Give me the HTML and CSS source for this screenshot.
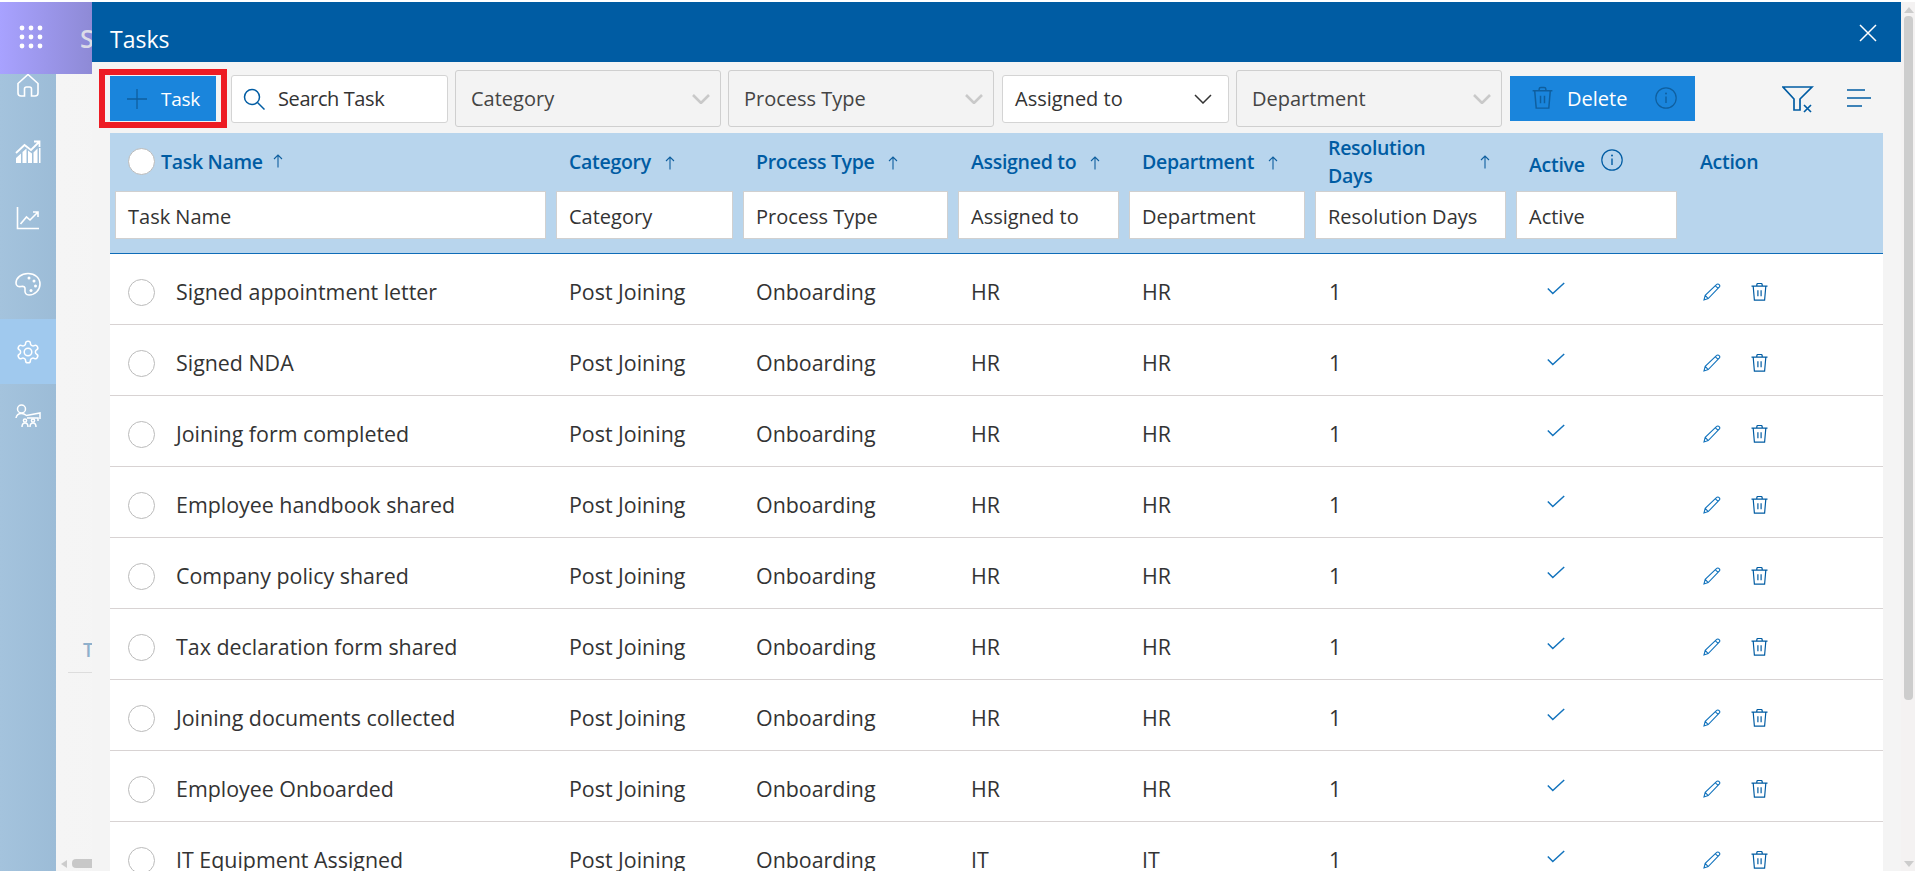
FILE: index.html

```html
<!DOCTYPE html>
<html lang="en">
<head>
    <meta charset="UTF-8">
    <title>Tasks</title>
    <link rel="stylesheet" href="styles.css">
</head>
<body>

<svg class="defs" width="0" height="0">
    <symbol id="i-arrow" viewBox="0 0 10 14"><path d="M5 13.500V1M1 5l4-4 4 4" fill="none" stroke="currentColor" stroke-width="1.100"/></symbol>
    <symbol id="i-check" viewBox="0 0 18 13"><path d="M.8 6.500l5 5L17.200 1" fill="none" stroke="currentColor" stroke-width="1.500"/></symbol>
    <symbol id="i-pencil" viewBox="0 0 18 18"><path d="M1 17l1.200-4.600L13.400 1.600a1.800 1.800 0 0 1 2.800 0 1.900 1.900 0 0 1 0 2.600L5.200 15.600zM2.200 12.400l3 3.200M12.400 2.800l3 2.800" fill="none" stroke="currentColor" stroke-width="1.100"/></symbol>
    <symbol id="i-trash" viewBox="0 0 17 18"><path d="M.5 3.200h16M2.200 3.200l1.200 14h10.200l1.200-14M5.800 3V1.800C5.800.9 6.500.5 7.200.5h2.600c.7 0 1.400.4 1.400 1.300V3M6.900 7.200v6M10.100 7.200v6" fill="none" stroke="currentColor" stroke-width="1.200"/></symbol>
    <symbol id="i-info" viewBox="0 0 22 22"><circle cx="11" cy="11" r="10.200" fill="none" stroke="currentColor" stroke-width="1.200"/><path d="M11 9.500v6.500" stroke="currentColor" stroke-width="1.400"/><circle cx="11" cy="6.600" r="1" fill="currentColor"/></symbol>
    <symbol id="i-chevron" viewBox="0 0 18 10"><path d="M1 1l8 8 8-8" fill="none" stroke="currentColor" stroke-width="2.600"/></symbol>
</svg>

<!-- Page behind the dialog -->
<div class="app">
    <div class="app-head">
        <svg class="grid-icon" width="24" height="24" viewBox="0 0 24 24" fill="#fff">
            <circle cx="3" cy="3" r="2.400"/><circle cx="12" cy="3" r="2.400"/><circle cx="21" cy="3" r="2.400"/>
            <circle cx="3" cy="12" r="2.400"/><circle cx="12" cy="12" r="2.400"/><circle cx="21" cy="12" r="2.400"/>
            <circle cx="3" cy="21" r="2.400"/><circle cx="12" cy="21" r="2.400"/><circle cx="21" cy="21" r="2.400"/>
        </svg>
        <span class="app-title">S</span>
    </div>
    <div class="app-main">
        <nav class="rail">
            <div class="rail-item rail-home">
                <svg width="24" height="24" viewBox="0 0 24 24" fill="none" stroke="#fff" stroke-width="1.600"><path d="M2 10.500L12 1.500l10 9v9.500a3 3 0 0 1-3 3h-3.500v-7a2 2 0 0 0-2-2h-3a2 2 0 0 0-2 2v7H5a3 3 0 0 1-3-3z"/></svg>
            </div>
            <div class="rail-item">
                <svg width="26" height="24" viewBox="0 0 26 24" fill="#fff"><path d="M1 23v-5l5-4.500V23zM7.500 23V12l4-3.500V23zM13 23V10.500l4 3V23zM18.500 23V12.500l4-4V23z"/><path d="M24 23V8h1.500v15z"/><path d="M1 13L9.500 5l6.500 5L24 2M19 1.500h5.500V7" fill="none" stroke="#fff" stroke-width="1.800"/></svg>
            </div>
            <div class="rail-item">
                <svg width="24" height="24" viewBox="0 0 24 24" fill="none" stroke="#fff" stroke-width="1.600"><path d="M1.500 1v21.500H23M4.500 18l6-7 3.500 3 7.500-7.500M17 6h5v5"/></svg>
            </div>
            <div class="rail-item">
                <svg width="26" height="24" viewBox="0 0 26 24" fill="none" stroke="#fff" stroke-width="1.600"><path d="M13 1.500C6 1.500 1 6 1 11c0 3 2.500 4 5 3.500 3-.6 4.500.5 4 3.500-.4 3 1 5 4 5 6 0 11-5 11-11S20 1.500 13 1.500z"/><g fill="#fff" stroke="none"><circle cx="14" cy="6" r="1.500"/><circle cx="19" cy="9" r="1.500"/><circle cx="20.500" cy="14" r="1.500"/><circle cx="16" cy="18.500" r="1.500"/></g></svg>
            </div>
            <div class="rail-item rail-active">
                <svg width="26" height="26" viewBox="0 0 24 24" fill="none" stroke="#fff" stroke-width="1.400"><path d="M12.220 2h-.44a2 2 0 0 0-2 2v.18a2 2 0 0 1-1 1.730l-.43.25a2 2 0 0 1-2 0l-.15-.08a2 2 0 0 0-2.730.73l-.22.38a2 2 0 0 0 .73 2.730l.15.1a2 2 0 0 1 1 1.720v.51a2 2 0 0 1-1 1.740l-.15.09a2 2 0 0 0-.73 2.730l.22.38a2 2 0 0 0 2.730.73l.15-.08a2 2 0 0 1 2 0l.43.25a2 2 0 0 1 1 1.730V20a2 2 0 0 0 2 2h.44a2 2 0 0 0 2-2v-.18a2 2 0 0 1 1-1.730l.43-.25a2 2 0 0 1 2 0l.15.08a2 2 0 0 0 2.730-.73l.22-.39a2 2 0 0 0-.73-2.730l-.15-.08a2 2 0 0 1-1-1.740v-.5a2 2 0 0 1 1-1.740l.15-.09a2 2 0 0 0 .73-2.730l-.22-.38a2 2 0 0 0-2.730-.73l-.15.08a2 2 0 0 1-2 0l-.43-.25a2 2 0 0 1-1-1.730V4a2 2 0 0 0-2-2z"/><circle cx="12" cy="12" r="3.500"/></svg>
            </div>
            <div class="rail-item rail-people">
                <svg width="26" height="24" viewBox="0 0 26 24" fill="none" stroke="#fff" stroke-width="1.500"><circle cx="6.500" cy="5" r="4"/><path d="M1 14c.5-3 3-4.500 5.500-4.500 2.200 0 3.500.8 5 2L25 9v6M7 23c0-3 1.500-4 3-4s3 1 3 4M15 23c0-3 1.500-4 3-4s3 1 3 4M12 14h11v3"/><circle cx="10" cy="16.500" r="1.600"/><circle cx="18" cy="16.500" r="1.600"/></svg>
            </div>
        </nav>
        <div class="content">
            <div class="content-title">T</div>
            <div class="content-bar">
                <span class="bar-arrow-left"></span>
                <span class="bar-thumb"></span>
            </div>
        </div>
    </div>
</div>

<!-- Dialog -->
<div class="overlay">
    <div class="modal">
        <div class="modal-head">
            <span class="modal-title">Tasks</span>
            <svg class="modal-close" width="18" height="18" viewBox="0 0 18 18"><path d="M1 1l16 16M17 1L1 17" stroke="#fff" stroke-width="1.500"/></svg>
        </div>

        <div class="toolbar">
            <div class="marked">
                <button class="btn btn-task">
                    <svg width="20" height="20" viewBox="0 0 20 20"><path d="M10 0v20M0 10h20" stroke="#0f5f9f" stroke-width="1.300"/></svg>
                    <span>Task</span>
                </button>
            </div>
            <div class="search">
                <svg width="22" height="22" viewBox="0 0 22 22" fill="none" stroke="#005ca3" stroke-width="1.500"><circle cx="9" cy="9" r="7.500"/><path d="M14.500 14.500l7 7"/></svg>
                <span>Search Task</span>
            </div>
            <div class="select select-off select-cat"><span>Category</span><svg class="chevron"><use href="#i-chevron"/></svg></div>
            <div class="select select-off select-cat"><span>Process Type</span><svg class="chevron"><use href="#i-chevron"/></svg></div>
            <div class="select select-on"><span>Assigned to</span><svg class="chevron" viewBox="0 0 18 10"><path d="M1 1l8 8 8-8" fill="none" stroke="#333" stroke-width="1.500"/></svg></div>
            <div class="select select-off select-cat"><span>Department</span><svg class="chevron"><use href="#i-chevron"/></svg></div>
            <button class="btn btn-delete">
                <svg class="delete-trash"><use href="#i-trash"/></svg>
                <span>Delete</span>
                <svg class="delete-info"><use href="#i-info"/></svg>
            </button>
            <div class="tool-icons">
                <svg width="32" height="27" viewBox="0 0 32 27" fill="none" stroke="#005ca3" stroke-width="1.700"><path d="M1 1h29L18 13v11h-6V13zM22 19l7 7M29 19l-7 7"/></svg>
                <svg width="24" height="18" viewBox="0 0 24 18" stroke="#005ca3" stroke-width="1.500"><path d="M0 1h18M0 9h24M0 17h15"/></svg>
            </div>
        </div>

        <table class="tasks">
            <colgroup>
                <col class="c-name"><col class="c-cat"><col class="c-proc"><col class="c-asg"><col class="c-dep"><col class="c-res"><col class="c-act"><col class="c-action">
            </colgroup>
            <thead>
                <tr class="head-row">
                    <th><span class="head-first"><span class="radio radio-head"></span>Task Name <svg class="sort"><use href="#i-arrow"/></svg></span></th>
                    <th>Category <svg class="sort"><use href="#i-arrow"/></svg></th>
                    <th>Process Type <svg class="sort"><use href="#i-arrow"/></svg></th>
                    <th>Assigned to <svg class="sort"><use href="#i-arrow"/></svg></th>
                    <th>Department <svg class="sort"><use href="#i-arrow"/></svg></th>
                    <th class="head-res"><span class="head-wrap"><span>Resolution<br>Days</span><svg class="sort"><use href="#i-arrow"/></svg></span></th>
                    <th><span class="head-active">Active</span> <svg class="head-info"><use href="#i-info"/></svg></th>
                    <th>Action</th>
                </tr>
                <tr class="filter-row">
                    <td><div class="filter">Task Name</div></td>
                    <td><div class="filter">Category</div></td>
                    <td><div class="filter">Process Type</div></td>
                    <td><div class="filter">Assigned to</div></td>
                    <td><div class="filter">Department</div></td>
                    <td><div class="filter">Resolution Days</div></td>
                    <td><div class="filter">Active</div></td>
                    <td></td>
                </tr>
            </thead>
            <tbody>
                <tr>
                    <td><span class="name"><span class="radio"></span>Signed appointment letter</span></td>
                    <td>Post Joining</td><td>Onboarding</td><td>HR</td><td>HR</td><td class="num">1</td>
                    <td class="active-cell"><svg class="check"><use href="#i-check"/></svg></td>
                    <td class="actions"><svg class="pencil"><use href="#i-pencil"/></svg><svg class="trash"><use href="#i-trash"/></svg></td>
                </tr>
                <tr>
                    <td><span class="name"><span class="radio"></span>Signed NDA</span></td>
                    <td>Post Joining</td><td>Onboarding</td><td>HR</td><td>HR</td><td class="num">1</td>
                    <td class="active-cell"><svg class="check"><use href="#i-check"/></svg></td>
                    <td class="actions"><svg class="pencil"><use href="#i-pencil"/></svg><svg class="trash"><use href="#i-trash"/></svg></td>
                </tr>
                <tr>
                    <td><span class="name"><span class="radio"></span>Joining form completed</span></td>
                    <td>Post Joining</td><td>Onboarding</td><td>HR</td><td>HR</td><td class="num">1</td>
                    <td class="active-cell"><svg class="check"><use href="#i-check"/></svg></td>
                    <td class="actions"><svg class="pencil"><use href="#i-pencil"/></svg><svg class="trash"><use href="#i-trash"/></svg></td>
                </tr>
                <tr>
                    <td><span class="name"><span class="radio"></span>Employee handbook shared</span></td>
                    <td>Post Joining</td><td>Onboarding</td><td>HR</td><td>HR</td><td class="num">1</td>
                    <td class="active-cell"><svg class="check"><use href="#i-check"/></svg></td>
                    <td class="actions"><svg class="pencil"><use href="#i-pencil"/></svg><svg class="trash"><use href="#i-trash"/></svg></td>
                </tr>
                <tr>
                    <td><span class="name"><span class="radio"></span>Company policy shared</span></td>
                    <td>Post Joining</td><td>Onboarding</td><td>HR</td><td>HR</td><td class="num">1</td>
                    <td class="active-cell"><svg class="check"><use href="#i-check"/></svg></td>
                    <td class="actions"><svg class="pencil"><use href="#i-pencil"/></svg><svg class="trash"><use href="#i-trash"/></svg></td>
                </tr>
                <tr>
                    <td><span class="name"><span class="radio"></span>Tax declaration form shared</span></td>
                    <td>Post Joining</td><td>Onboarding</td><td>HR</td><td>HR</td><td class="num">1</td>
                    <td class="active-cell"><svg class="check"><use href="#i-check"/></svg></td>
                    <td class="actions"><svg class="pencil"><use href="#i-pencil"/></svg><svg class="trash"><use href="#i-trash"/></svg></td>
                </tr>
                <tr>
                    <td><span class="name"><span class="radio"></span>Joining documents collected</span></td>
                    <td>Post Joining</td><td>Onboarding</td><td>HR</td><td>HR</td><td class="num">1</td>
                    <td class="active-cell"><svg class="check"><use href="#i-check"/></svg></td>
                    <td class="actions"><svg class="pencil"><use href="#i-pencil"/></svg><svg class="trash"><use href="#i-trash"/></svg></td>
                </tr>
                <tr>
                    <td><span class="name"><span class="radio"></span>Employee Onboarded</span></td>
                    <td>Post Joining</td><td>Onboarding</td><td>HR</td><td>HR</td><td class="num">1</td>
                    <td class="active-cell"><svg class="check"><use href="#i-check"/></svg></td>
                    <td class="actions"><svg class="pencil"><use href="#i-pencil"/></svg><svg class="trash"><use href="#i-trash"/></svg></td>
                </tr>
                <tr>
                    <td><span class="name"><span class="radio"></span>IT Equipment Assigned</span></td>
                    <td>Post Joining</td><td>Onboarding</td><td>IT</td><td>IT</td><td class="num">1</td>
                    <td class="active-cell"><svg class="check"><use href="#i-check"/></svg></td>
                    <td class="actions"><svg class="pencil"><use href="#i-pencil"/></svg><svg class="trash"><use href="#i-trash"/></svg></td>
                </tr>
            </tbody>
        </table>
    </div>

    <div class="scrollbar">
        <span class="scroll-up"></span>
        <span class="scroll-thumb"></span>
        <span class="scroll-down"></span>
    </div>
</div>

</body>
</html>
```

FILE: styles.css

```css
* { box-sizing: border-box; }

html, body {
    margin: 0;
    height: 100%;
    overflow: hidden;
    background: #fff;
    font-family: "Open Sans", "Noto Sans", sans-serif;
    color: #333;
}

.defs { position: absolute; }

/* Page behind the dialog */
.app {
    margin-top: 2px;
    height: 869px;
    display: flex;
    flex-direction: column;
}
.app-head {
    height: 72px;
    flex: none;
    display: flex;
    align-items: center;
    padding-left: 19px;
    background: linear-gradient(90deg, #a8a2ff 0, #8e8ad6 92px);
}
.grid-icon { margin-top: -2px; }
.app-title {
    margin-left: 37px;
    font-size: 25px;
    font-weight: 600;
    color: #dcdce8;
}
.app-main {
    flex: 1;
    display: flex;
    min-height: 0;
}
.rail {
    width: 56px;
    flex: none;
    overflow: hidden;
    background: linear-gradient(90deg, #a4c3dd, #9cbcd7);
}
.rail-item {
    height: 65px;
    margin-top: 1px;
    display: flex;
    align-items: center;
    justify-content: center;
}
.rail-home { height: 44px; margin-top: 0; align-items: flex-start; }
.rail-home svg { margin-top: -1px; }
.rail-active { margin-top: 3px; background: #a0c9ee; }
.rail-people { margin-top: -1px; }
.content {
    flex: 1;
    display: flex;
    flex-direction: column;
    background: linear-gradient(90deg, #f5f5f5 0, #ececec 45%, #c4c4c4 100%);
}
.content-title {
    height: 38px;
    margin: auto 0 0 12px;
    padding: 2px 0 0 15px;
    font-size: 19px;
    font-weight: 600;
    color: #8fb0cc;
    border-bottom: 1px solid #ddd;
}
.content-bar {
    margin-top: 183px;
    height: 15px;
    display: flex;
    align-items: center;
    padding-left: 5px;
    gap: 5px;
}
.bar-arrow-left {
    width: 0;
    height: 0;
    border: 4px solid transparent;
    border-right: 6px solid #ccc;
    border-left: 0;
}
.bar-thumb {
    flex: 1;
    height: 9px;
    background: #c8c8c8;
    border-radius: 4px 0 0 4px;
}

/* Dialog */
.overlay {
    position: absolute;
    top: 2px;
    left: 92px;
    right: 0;
    height: 869px;
    display: flex;
}
.modal {
    flex: 1;
    min-width: 0;
    overflow: hidden;
    background: #f4f4f4;
}
.modal-head {
    height: 60px;
    display: flex;
    align-items: center;
    justify-content: space-between;
    padding: 0 24px 0 18px;
    background: #005ca3;
    color: #fff;
}
.modal-title { font-size: 23px; margin-top: 14px; }
.modal-close { margin-top: 2px; }

.toolbar {
    height: 71px;
    display: flex;
    align-items: center;
    padding: 2px 0 0 7px;
    font-size: 20px;
}
.marked {
    flex: none;
    padding: 1px 5px;
    border: 6px solid #ed1c24;
}
.btn {
    height: 45px;
    display: flex;
    align-items: center;
    border: 0;
    padding: 0;
    background: #1a85dc;
    color: #fff;
    font: inherit;
}
.btn-task {
    width: 106px;
    padding-left: 17px;
    gap: 14px;
    font-size: 19px;
    letter-spacing: -0.3px;
}
.search {
    width: 217px;
    height: 48px;
    margin-left: 4px;
    display: flex;
    align-items: center;
    gap: 13px;
    padding-left: 11px;
    background: #fff;
    border: 1px solid #d4d4d4;
    border-radius: 3px;
    letter-spacing: -0.4px;
}
.select {
    display: flex;
    align-items: center;
    justify-content: space-between;
    padding: 0 10px 0 15px;
    border-radius: 3px;
    margin-left: 7px;
}
.select-cat { width: 266px; }
.select-off {
    height: 57px;
    background: #f3f3f3;
    border: 1px solid #cfcfcf;
    color: #444;
}
.select-on {
    width: 227px;
    height: 48px;
    margin-left: 8px;
    padding-left: 12px;
    background: #fff;
    border: 1px solid #d4d4d4;
    color: #333;
}
.chevron { width: 18px; height: 10px; color: #c9c9c9; }
.select-on .chevron { margin-right: 6px; }
.btn-delete {
    width: 185px;
    margin-left: 8px;
    padding-left: 22px;
}
.delete-trash { width: 21px; height: 24px; color: #0f5f9f; margin-top: -2px; }
.delete-info { width: 22px; height: 22px; color: #0f5f9f; margin: -2px 0 0 28px; }
.btn-delete span { margin-left: 14px; }
.tool-icons {
    margin-left: 87px;
    display: flex;
    align-items: center;
    gap: 33px;
}
.tool-icons svg:first-child { margin-top: 2px; }
.tool-icons svg:last-child { margin-top: -2px; }

/* Table */
.tasks {
    width: 1773px;
    margin-left: 18px;
    table-layout: fixed;
    border-collapse: collapse;
    font-size: 21.4px;
}
.c-name { width: 442px; }
.c-cat { width: 187px; }
.c-proc { width: 215px; }
.c-asg { width: 171px; }
.c-dep { width: 186px; }
.c-res { width: 201px; }
.c-act { width: 171px; }
.c-action { width: 200px; }

.tasks thead { background: #b8d5ed; }
.head-row { height: 58px; }
.head-row th {
    padding: 0 5px 2px 17px;
    text-align: left;
    font-weight: 600;
    font-size: 19.5px;
    color: #005ca3;
    vertical-align: middle;
    letter-spacing: -0.3px;
}
.head-row th.head-res { padding-bottom: 0; }
.sort { width: 10px; height: 14px; margin-left: 9px; color: #0f5f9f; vertical-align: -1px; }
.head-first { display: flex; align-items: center; gap: 5px; margin-left: 1px; white-space: nowrap; }
.head-first .sort { margin-left: 5px; }
.head-first .radio { margin-right: 1px; }
.head-wrap {
    display: flex;
    align-items: center;
    justify-content: space-between;
    line-height: 28px;
    padding-right: 17px;
}
.head-active { position: relative; top: 3px; }
.head-info { width: 22px; height: 22px; margin-left: 12px; color: #005ca3; vertical-align: -2px; }

.filter-row { height: 62px; border-bottom: 1px solid #0e6cb8; }
.filter-row td { padding: 0 6px 14px 4px; vertical-align: top; }
.filter-row td:first-child { padding-left: 5px; }
.filter {
    height: 48px;
    display: flex;
    align-items: center;
    padding: 2px 0 0 12px;
    background: #fff;
    border: 1px solid #d0d0d0;
    font-size: 20px;
    white-space: nowrap;
}

.tasks tbody tr { height: 71px; border-bottom: 1px solid #d8d3d3; background: #fff; }
.tasks tbody td { padding: 4px 5px 0 17px; white-space: nowrap; }
.radio {
    flex: none;
    width: 27px;
    height: 27px;
    border: 1px solid #bbb;
    border-radius: 50%;
    background: #fff;
}
.name { display: flex; align-items: center; gap: 21px; margin-left: 1px; }
.name .radio { margin-top: 2px; }
.num { padding-left: 18px !important; }
.active-cell { padding-left: 35px !important; }
.check { width: 18px; height: 13px; color: #1273bd; margin-top: -5px; display: block; }
.actions { padding-left: 20px !important; }
.actions svg { color: #1273bd; }
.pencil { width: 18px; height: 18px; margin-right: 30px; vertical-align: -1px; }
.trash { width: 17px; height: 18px; vertical-align: -1px; color: #005ca3 !important; }

/* Window scrollbar */
.scrollbar {
    width: 14px;
    flex: none;
    padding: 5px 2px 0 3px;
    display: flex;
    flex-direction: column;
    align-items: center;
    background: #f4f2f2;
}
.scroll-up {
    width: 0;
    height: 0;
    border: 5px solid transparent;
    border-bottom: 6px solid #ccc;
    border-top: 0;
}
.scroll-thumb {
    width: 9px;
    height: 684px;
    margin-top: 3px;
    background: #cdcdcd;
    border-radius: 4px;
}
.scroll-down {
    width: 0;
    height: 0;
    margin-top: auto;
    margin-bottom: 4px;
    border: 5px solid transparent;
    border-top: 6px solid #ccc;
    border-bottom: 0;
}
```
